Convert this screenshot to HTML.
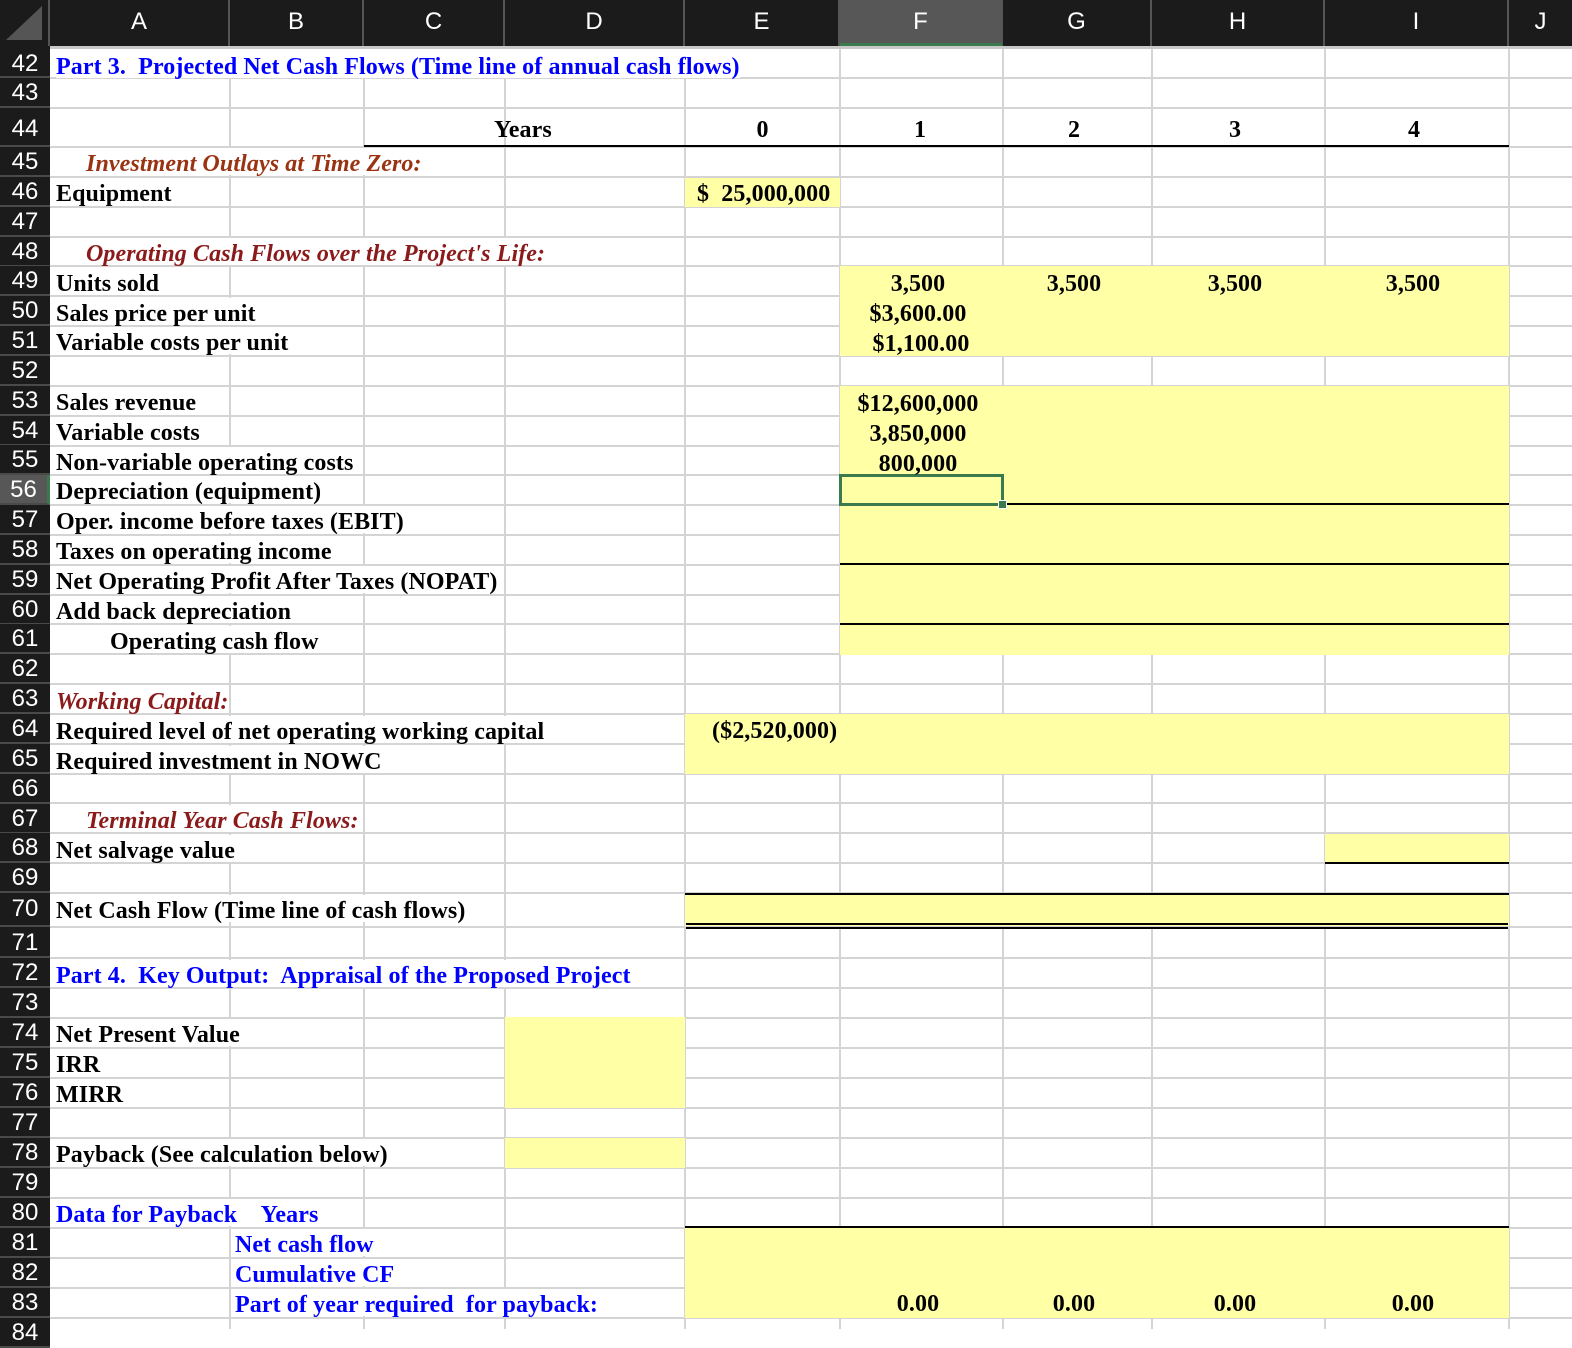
<!DOCTYPE html>
<html><head><meta charset="utf-8">
<style>
*{margin:0;padding:0;box-sizing:border-box}
body{width:1572px;height:1329px;position:relative;overflow:hidden;background:#fff;font-family:"Liberation Serif",serif}
div{position:absolute}
.h{left:50px;width:1522px;height:2px;background:#d4d4d4}
.v{top:49px;height:1280px;width:2px;background:#d4d4d4}
.y{background:#ffffa6}
.k{background:#000}
.t{white-space:nowrap;font-weight:bold;font-size:24px;height:30px;line-height:33px;color:#000;letter-spacing:0.1px}
.w{background:#fff;height:27px;line-height:32px}
.c{text-align:center}
.b{color:#0000ff}
.r{color:#8b1a1a;font-style:italic}
.rn{left:0;width:50px;color:#fff;font:24px "Liberation Sans",sans-serif;text-align:center;height:30px;line-height:30px;background:#1b1b1b;border-bottom:2px solid #4a4a4a}
.ch{top:0;height:46px;color:#fff;font:24px "Liberation Sans",sans-serif;line-height:44px;text-align:center;background:#1b1b1b;border-right:2px solid #555}
</style></head><body>
<div class="v" style="left:229px"></div><div class="v" style="left:363px"></div><div class="v" style="left:504px"></div><div class="v" style="left:684px"></div><div class="v" style="left:839px"></div><div class="v" style="left:1002px"></div><div class="v" style="left:1151px"></div><div class="v" style="left:1324px"></div><div class="v" style="left:1508px"></div>
<div class="h" style="top:77px"></div><div class="h" style="top:107px"></div><div class="h" style="top:146px"></div>
<div class="h" style="top:176px"></div><div class="h" style="top:206px"></div><div class="h" style="top:236px"></div><div class="h" style="top:265px"></div><div class="h" style="top:295px"></div><div class="h" style="top:325px"></div><div class="h" style="top:355px"></div><div class="h" style="top:385px"></div><div class="h" style="top:415px"></div><div class="h" style="top:445px"></div><div class="h" style="top:474px"></div><div class="h" style="top:504px"></div><div class="h" style="top:534px"></div><div class="h" style="top:564px"></div><div class="h" style="top:594px"></div><div class="h" style="top:623px"></div><div class="h" style="top:653px"></div><div class="h" style="top:683px"></div><div class="h" style="top:713px"></div><div class="h" style="top:743px"></div><div class="h" style="top:773px"></div><div class="h" style="top:802px"></div><div class="h" style="top:832px"></div><div class="h" style="top:862px"></div><div class="h" style="top:892px"></div><div class="h" style="top:926px"></div><div class="h" style="top:957px"></div><div class="h" style="top:987px"></div><div class="h" style="top:1017px"></div><div class="h" style="top:1047px"></div><div class="h" style="top:1077px"></div><div class="h" style="top:1107px"></div><div class="h" style="top:1137px"></div><div class="h" style="top:1167px"></div><div class="h" style="top:1197px"></div><div class="h" style="top:1227px"></div><div class="h" style="top:1257px"></div><div class="h" style="top:1287px"></div><div class="h" style="top:1317px"></div>
<div style="left:50px;top:49px;width:789px;height:28px;background:#fff"></div>
<div class="y" style="left:685px;top:178px;width:155px;height:29px"></div>
<div class="y" style="left:840px;top:266px;width:669px;height:90px"></div>
<div class="y" style="left:840px;top:386px;width:669px;height:269px"></div>
<div class="y" style="left:685px;top:714px;width:824px;height:60px"></div>
<div class="y" style="left:1325px;top:834px;width:184px;height:30px"></div>
<div class="y" style="left:685px;top:895px;width:824px;height:31px"></div>
<div class="y" style="left:505px;top:1017px;width:180px;height:91px"></div>
<div class="y" style="left:505px;top:1138px;width:180px;height:30px"></div>
<div class="y" style="left:685px;top:1228px;width:824px;height:90px"></div>
<div class="k" style="left:364px;top:145px;width:1145px;height:2px"></div>
<div class="k" style="left:1003px;top:503px;width:506px;height:2px"></div>
<div class="k" style="left:840px;top:563px;width:669px;height:2px"></div>
<div class="k" style="left:840px;top:623px;width:669px;height:2px"></div>
<div class="k" style="left:1325px;top:862px;width:184px;height:2px"></div>
<div class="k" style="left:685px;top:893px;width:824px;height:2px"></div>
<div class="k" style="left:686px;top:923px;width:822px;height:2px"></div>
<div class="k" style="left:686px;top:927px;width:822px;height:2px"></div>
<div class="k" style="left:685px;top:1226px;width:824px;height:2px"></div>
<div style="left:839px;top:474px;width:165px;height:32px;border:3px solid #3a7a4c"></div>
<div style="left:998px;top:500px;width:9px;height:9px;background:#3a7a4c;border:1px solid #fff"></div>
<div style="left:0;top:0;width:1572px;height:49px;background:#c8c8c8"></div>
<div class="ch" style="left:0;width:50px"><div style="left:6px;top:6px;width:0;height:0;border-left:36px solid transparent;border-bottom:34px solid #555"></div></div>
<div class="ch" style="left:50px;width:180px">A</div>
<div class="ch" style="left:230px;width:134px">B</div>
<div class="ch" style="left:364px;width:141px">C</div>
<div class="ch" style="left:505px;width:180px">D</div>
<div class="ch" style="left:685px;width:155px">E</div>
<div class="ch" style="left:840px;width:163px;background:#575757;border-bottom:3px solid #3a7a4c">F</div>
<div class="ch" style="left:1003px;width:149px">G</div>
<div class="ch" style="left:1152px;width:173px">H</div>
<div class="ch" style="left:1325px;width:184px">I</div>
<div class="ch" style="left:1509px;width:63px;border-right:none">J</div>
<div style="left:0;top:46px;width:50px;height:1283px;background:#1b1b1b"></div>
<div class="rn" style="top:49px;height:29px">42</div>
<div class="rn" style="top:78px">43</div>
<div class="rn" style="top:108px;height:39px;line-height:42px">44</div>
<div class="rn" style="top:147px">45</div>
<div class="rn" style="top:176.8px">46</div>
<div class="rn" style="top:206.7px">47</div>
<div class="rn" style="top:236.5px">48</div>
<div class="rn" style="top:266.4px">49</div>
<div class="rn" style="top:296.2px">50</div>
<div class="rn" style="top:326px">51</div>
<div class="rn" style="top:355.9px">52</div>
<div class="rn" style="top:385.7px">53</div>
<div class="rn" style="top:415.6px">54</div>
<div class="rn" style="top:445.4px">55</div>
<div class="rn" style="top:475.2px;background:#575757;border-right:3px solid #3a7a4c">56</div>
<div class="rn" style="top:505.1px">57</div>
<div class="rn" style="top:534.9px">58</div>
<div class="rn" style="top:564.8px">59</div>
<div class="rn" style="top:594.6px">60</div>
<div class="rn" style="top:624.4px">61</div>
<div class="rn" style="top:654.3px">62</div>
<div class="rn" style="top:684.1px">63</div>
<div class="rn" style="top:714px">64</div>
<div class="rn" style="top:743.8px">65</div>
<div class="rn" style="top:773.6px">66</div>
<div class="rn" style="top:803.5px">67</div>
<div class="rn" style="top:833.3px">68</div>
<div class="rn" style="top:863.2px">69</div>
<div class="rn" style="top:893px;height:34px;line-height:32px">70</div>
<div class="rn" style="top:927px;height:31px;line-height:32px">71</div>
<div class="rn" style="top:958px">72</div>
<div class="rn" style="top:988px">73</div>
<div class="rn" style="top:1018px">74</div>
<div class="rn" style="top:1048px">75</div>
<div class="rn" style="top:1078px">76</div>
<div class="rn" style="top:1108px">77</div>
<div class="rn" style="top:1138px">78</div>
<div class="rn" style="top:1168px">79</div>
<div class="rn" style="top:1198px">80</div>
<div class="rn" style="top:1228px">81</div>
<div class="rn" style="top:1258px">82</div>
<div class="rn" style="top:1288px">83</div>
<div class="rn" style="top:1318px">84</div>
<div class="t b w" style="left:56px;top:51px">Part 3.&nbsp; Projected Net Cash Flows (Time line of annual cash flows)</div>
<div class="t" style="left:494px;top:114px">Years</div>
<div class="t c" style="left:685px;width:155px;top:114px">0</div>
<div class="t c" style="left:840px;width:160px;top:114px">1</div>
<div class="t c" style="left:1003px;width:142px;top:114px">2</div>
<div class="t c" style="left:1152px;width:166px;top:114px">3</div>
<div class="t c" style="left:1325px;width:178px;top:114px">4</div>
<div class="t r w" style="left:86px;top:148px;color:#993311">Investment Outlays at Time Zero:</div>
<div class="t w" style="left:56px;top:178px">Equipment</div>
<div class="t" style="left:697px;top:178px">$&nbsp; 25,000,000</div>
<div class="t r w" style="left:86px;top:238px">Operating Cash Flows over the Project's Life:</div>
<div class="t w" style="left:56px;top:268px">Units sold</div>
<div class="t w" style="left:56px;top:298px">Sales price per unit</div>
<div class="t w" style="left:56px;top:327px">Variable costs per unit</div>
<div class="t w" style="left:56px;top:387px">Sales revenue</div>
<div class="t w" style="left:56px;top:417px">Variable costs</div>
<div class="t w" style="left:56px;top:447px">Non-variable operating costs</div>
<div class="t w" style="left:56px;top:476px">Depreciation (equipment)</div>
<div class="t w" style="left:56px;top:506px">Oper. income before taxes (EBIT)</div>
<div class="t w" style="left:56px;top:536px">Taxes on operating income</div>
<div class="t w" style="left:56px;top:566px">Net Operating Profit After Taxes (NOPAT)</div>
<div class="t w" style="left:56px;top:596px">Add back depreciation</div>
<div class="t w" style="left:110px;top:626px">Operating cash flow</div>
<div class="t c" style="left:840px;width:156px;top:268px">3,500</div>
<div class="t c" style="left:1003px;width:142px;top:268px">3,500</div>
<div class="t c" style="left:1152px;width:166px;top:268px">3,500</div>
<div class="t c" style="left:1325px;width:176px;top:268px">3,500</div>
<div class="t c" style="left:840px;width:156px;top:298px">$3,600.00</div>
<div class="t c" style="left:840px;width:162px;top:328px">$1,100.00</div>
<div class="t c" style="left:840px;width:156px;top:388px">$12,600,000</div>
<div class="t c" style="left:840px;width:156px;top:418px">3,850,000</div>
<div class="t c" style="left:840px;width:156px;top:448px">800,000</div>
<div class="t r w" style="left:56px;top:686px">Working Capital:</div>
<div class="t w" style="left:56px;top:716px">Required level of net operating working capital</div>
<div class="t w" style="left:56px;top:746px">Required investment in NOWC</div>
<div class="t" style="left:712px;top:715px">($2,520,000)</div>
<div class="t r w" style="left:86px;top:805px">Terminal Year Cash Flows:</div>
<div class="t w" style="left:56px;top:835px">Net salvage value</div>
<div class="t w" style="left:56px;top:895px">Net Cash Flow (Time line of cash flows)</div>
<div class="t b w" style="left:56px;top:960px">Part 4.&nbsp; Key Output:&nbsp; Appraisal of the Proposed Project</div>
<div class="t w" style="left:56px;top:1019px">Net Present Value</div>
<div class="t w" style="left:56px;top:1049px">IRR</div>
<div class="t w" style="left:56px;top:1079px">MIRR</div>
<div class="t w" style="left:56px;top:1139px">Payback (See calculation below)</div>
<div class="t b w" style="left:56px;top:1199px">Data for Payback&nbsp;&nbsp;&nbsp; Years</div>
<div class="t b w" style="left:235px;top:1229px">Net cash flow</div>
<div class="t b w" style="left:235px;top:1259px">Cumulative CF</div>
<div class="t b w" style="left:235px;top:1289px">Part of year required&nbsp; for payback:</div>
<div class="t c" style="left:840px;width:156px;top:1288px">0.00</div>
<div class="t c" style="left:1003px;width:142px;top:1288px">0.00</div>
<div class="t c" style="left:1152px;width:166px;top:1288px">0.00</div>
<div class="t c" style="left:1325px;width:176px;top:1288px">0.00</div>
</body></html>
